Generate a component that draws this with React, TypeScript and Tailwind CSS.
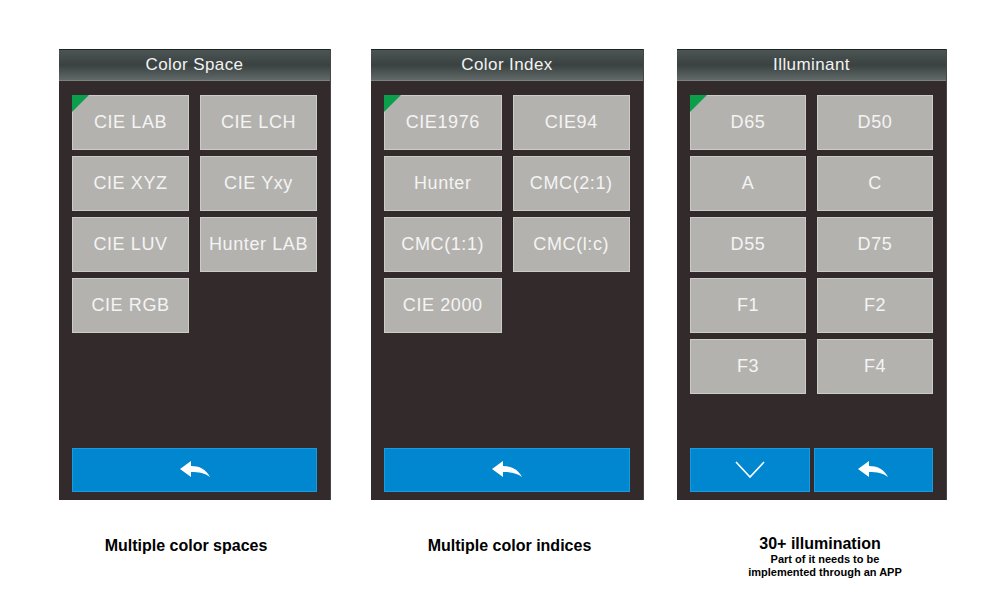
import React from 'react'

const font = { fontFamily: '"Liberation Sans", Arial, sans-serif' }

function BackArrow() {
  return (
    <svg width="30" height="20" viewBox="0 0 30 20" fill="#ffffff">
      <path d="M0 9 L11 1 L11 6 C19 6 26 9 30 17 C25 13 19 12 11 12 L11 17 Z" />
    </svg>
  )
}

function DownChevron() {
  return (
    <svg width="30" height="18" viewBox="0 0 30 18" fill="none" stroke="#ffffff" strokeWidth="1.6">
      <path d="M1 1 L15 16 L29 1" />
    </svg>
  )
}

function Key({ label, selected }: { label: string; selected?: boolean }) {
  return (
    <div className="relative flex h-[55px] items-center justify-center border border-[#cdcbc7] bg-[#b4b2ae] text-[18px] tracking-[0.6px] text-[#f4f4f4]">
      {selected && (
        <span className="absolute -left-px -top-px h-[17px] w-[17px] bg-[#0b9f4c] [clip-path:polygon(0_0,100%_0,0_100%)]" />
      )}
      {label}
    </div>
  )
}

function Panel({
  title,
  items,
  width,
  children,
}: {
  title: string
  items: string[]
  width: string
  children: React.ReactNode
}) {
  return (
    <div className={`flex h-[451px] flex-col border-r border-[#4a4545] bg-[#332b2b] ${width}`}>
      <div className="flex h-[32px] items-center justify-center border-t border-[#1e2222] border-b border-b-[#7b8280] bg-[linear-gradient(to_bottom,#4b5554_0%,#3a4241_50%,#606967_100%)] text-[17px] tracking-[0.4px] text-[#f2f2f2]">
        {title}
      </div>
      <div className="grid grid-cols-2 gap-x-[11px] gap-y-[6px] px-[13px] pt-[14px]">
        {items.map((it, i) => (
          <Key key={it} label={it} selected={i === 0} />
        ))}
      </div>
      <div className="mt-auto flex gap-[4px] px-[13px] pb-[8px]">{children}</div>
    </div>
  )
}

function Blue({ children }: { children: React.ReactNode }) {
  return (
    <div className="flex h-[44px] flex-1 items-center justify-center border border-[#1a9be0] bg-[#0087d0]">
      {children}
    </div>
  )
}

export default function App() {
  return (
    <div className="h-[600px] w-[1000px] bg-white pt-[49px]" style={font}>
      <div className="flex items-start">
        <div className="ml-[59px] flex flex-col items-center">
          <Panel
            title="Color Space"
            width="w-[272px]"
            items={['CIE LAB', 'CIE LCH', 'CIE XYZ', 'CIE Yxy', 'CIE LUV', 'Hunter LAB', 'CIE RGB']}
          >
            <Blue>
              <BackArrow />
            </Blue>
          </Panel>
          <p className="mr-[18px] mt-[34px] text-[16px] font-bold text-black">Multiple color spaces</p>
        </div>
        <div className="ml-[40px] flex flex-col items-center">
          <Panel
            title="Color Index"
            width="w-[273px]"
            items={['CIE1976', 'CIE94', 'Hunter', 'CMC(2:1)', 'CMC(1:1)', 'CMC(l:c)', 'CIE 2000']}
          >
            <Blue>
              <BackArrow />
            </Blue>
          </Panel>
          <p className="ml-[4px] mt-[34px] text-[16px] font-bold text-black">Multiple color indices</p>
        </div>
        <div className="ml-[33px] flex flex-col items-center">
          <Panel
            title="Illuminant"
            width="w-[270px]"
            items={['D65', 'D50', 'A', 'C', 'D55', 'D75', 'F1', 'F2', 'F3', 'F4']}
          >
            <Blue>
              <DownChevron />
            </Blue>
            <Blue>
              <BackArrow />
            </Blue>
          </Panel>
          <p className="ml-[16px] mt-[34px] text-[16px] font-bold leading-[19px] text-black">30+ illumination</p>
          <p className="ml-[26px] text-center text-[11px] font-bold leading-[13px] text-black">
            Part of it needs to be
            <br />
            implemented through an APP
          </p>
        </div>
      </div>
    </div>
  )
}
